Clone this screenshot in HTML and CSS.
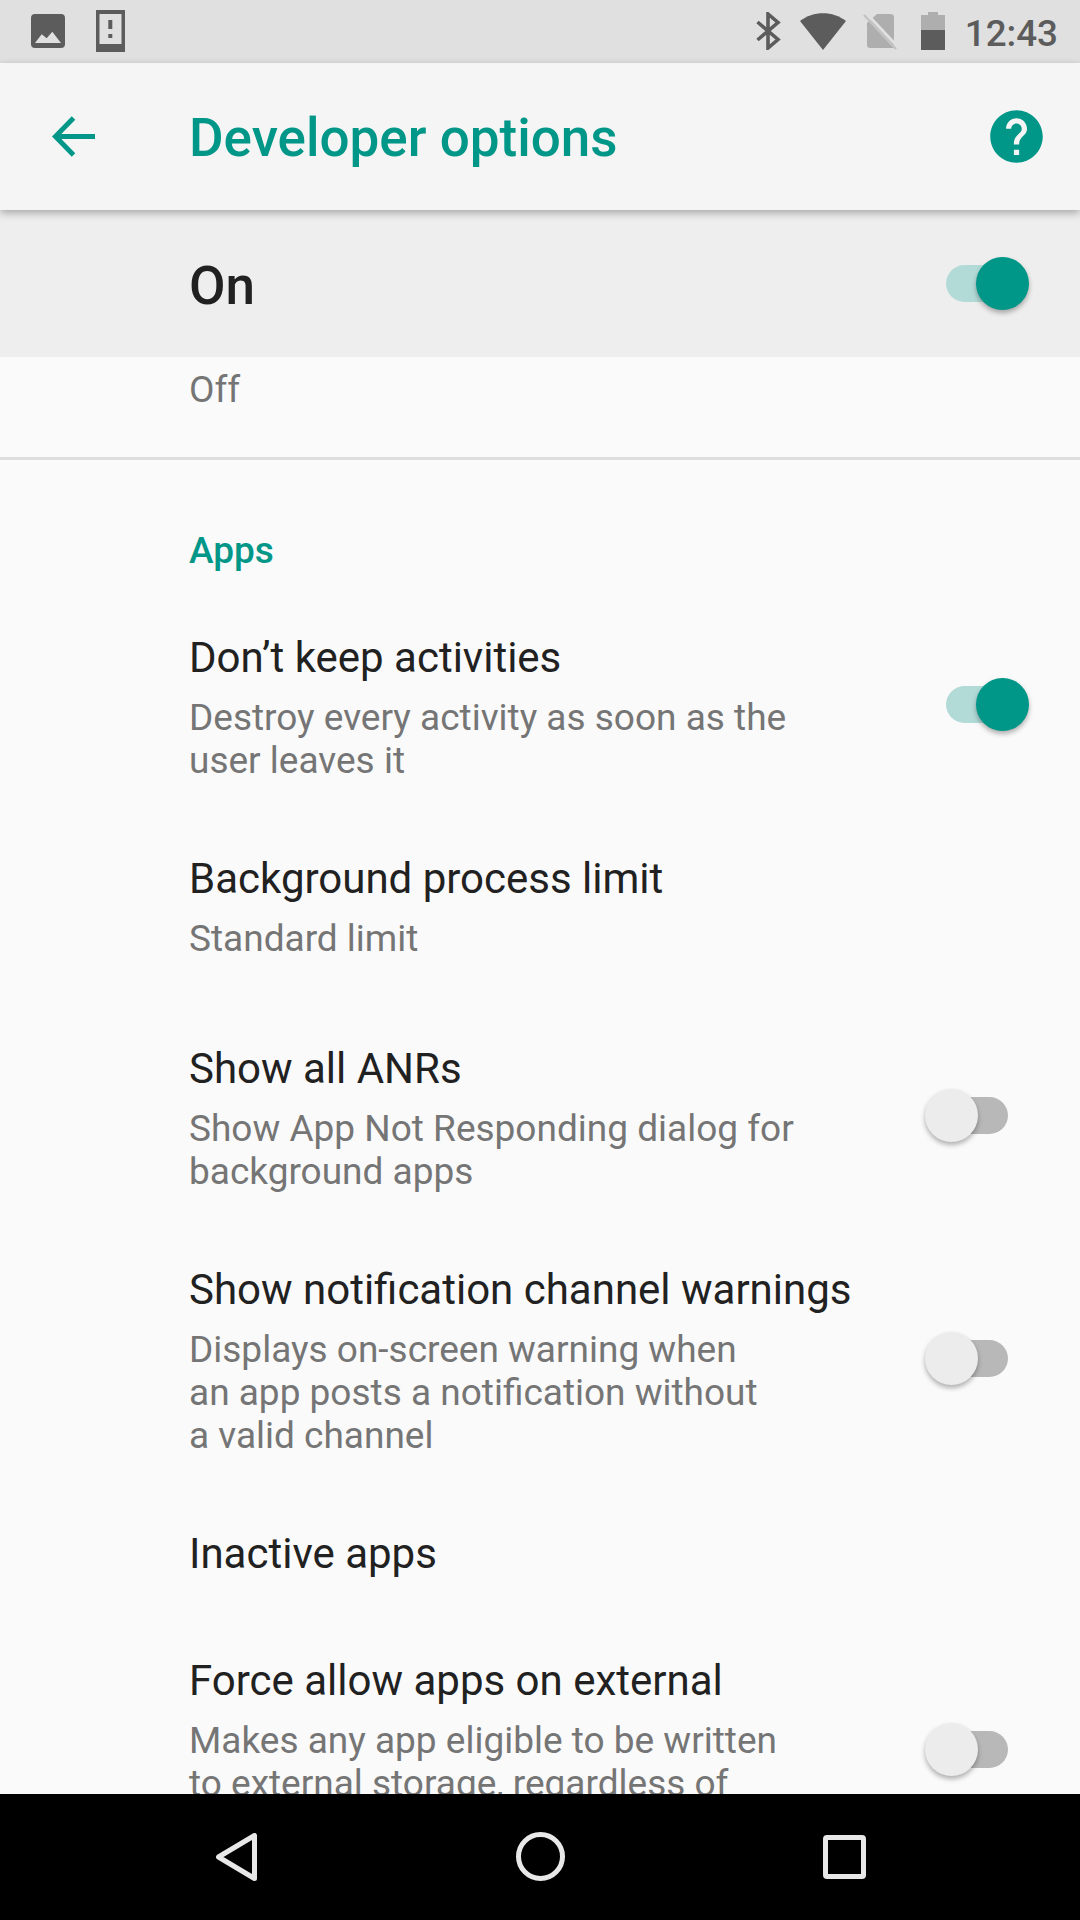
FILE: index.html
```html
<!DOCTYPE html>
<html lang="en">
<head>
<meta charset="utf-8">
<title>Developer options</title>
<link rel="stylesheet" href="styles.css">
</head>
<body>
<div class="screen">
  <header class="status">
    <div class="status-left">
      <svg class="ic-image" viewBox="0 0 34 34"><rect width="34" height="34" rx="4" fill="#5c5c5c"/><path d="M4 29 L10.700 20.300 L15.700 24.300 L21.300 17.700 L30 29 Z" fill="#e0e0e0"/></svg>
      <svg class="ic-alert" viewBox="0 0 29 42"><path fill-rule="evenodd" d="M0 0H29V42H0Z M3.500 4V34H25.500V4Z" fill="#5c5c5c"/><rect x="12.3" y="10" width="4" height="9" fill="#5c5c5c"/><rect x="12.3" y="24" width="4" height="4" fill="#5c5c5c"/></svg>
    </div>
    <div class="status-right">
      <svg class="ic-bt" viewBox="0 0 25 38"><path d="M1.500 10 L22 27.500 L12 36 V2 L22 10.500 L1.500 28" fill="none" stroke="#5c5c5c" stroke-width="3.600"/></svg>
      <svg class="ic-wifi" viewBox="0 0 46 37"><path d="M0 8 C13 -2.500 33 -2.500 46 8 L23 37 Z" fill="#5c5c5c"/></svg>
      <svg class="ic-sim" viewBox="0 0 34 36"><path d="M14 0 H27 Q31 0 31 3 V34 H7 Q4 34 4 31 V9 Z" fill="#aeaeae"/><path d="M3 -1 L35 33" stroke="#e0e0e0" stroke-width="3"/><path d="M1 1 L33 35" stroke="#c4c4c4" stroke-width="2.500"/></svg>
      <svg class="ic-batt" viewBox="0 0 24 38"><path d="M7 0 H17 V3 H24 V18 H0 V3 H7 Z" fill="#aeaeae"/><rect y="18" width="24" height="20" fill="#5c5c5c"/></svg>
      <span class="clock">12:43</span>
    </div>
  </header>

  <div class="toolbar">
    <svg class="ic-back" viewBox="0 0 44 44"><path d="M44 22 H4 M22 3 L3.500 22 L22 41" fill="none" stroke="#009688" stroke-width="5"/></svg>
    <h1 class="toolbar-title">Developer options</h1>
    <svg class="ic-help" viewBox="0 0 24 24"><path fill="#009688" d="M12 2C6.480 2 2 6.480 2 12s4.480 10 10 10 10-4.480 10-10S17.520 2 12 2zm1 17h-2v-2h2v2zm2.070-7.750l-.9.920C13.450 12.900 13 13.500 13 15h-2v-.5c0-1.100.45-2.100 1.170-2.830l1.240-1.260c.37-.36.59-.86.59-1.410 0-1.100-.9-2-2-2s-2 .9-2 2H8c0-2.210 1.790-4 4-4s4 1.790 4 4c0 .88-.36 1.680-.93 2.250z"/></svg>
  </div>

  <div class="master">
    <span class="master-label">On</span>
    <span class="switch on"><span class="track"></span><span class="thumb"></span></span>
  </div>

  <main class="content">
    <div class="off-row">Off</div>
    <div class="section-title">Apps</div>

    <div class="row">
      <div class="text"><div class="title">Don’t keep activities</div><div class="desc">Destroy every activity as soon as the<br>user leaves it</div></div>
      <span class="switch on"><span class="track"></span><span class="thumb"></span></span>
    </div>
    <div class="row row-single">
      <div class="text"><div class="title">Background process limit</div><div class="desc">Standard limit</div></div>
    </div>
    <div class="row">
      <div class="text"><div class="title">Show all ANRs</div><div class="desc">Show App Not Responding dialog for<br>background apps</div></div>
      <span class="switch"><span class="track"></span><span class="thumb"></span></span>
    </div>
    <div class="row">
      <div class="text"><div class="title">Show notification channel warnings</div><div class="desc">Displays on-screen warning when<br>an app posts a notification without<br>a valid channel</div></div>
      <span class="switch"><span class="track"></span><span class="thumb"></span></span>
    </div>
    <div class="row row-title">
      <div class="text"><div class="title">Inactive apps</div></div>
    </div>
    <div class="row">
      <div class="text"><div class="title">Force allow apps on external</div><div class="desc">Makes any app eligible to be written<br>to external storage, regardless of<br>manifest values</div></div>
      <span class="switch"><span class="track"></span><span class="thumb"></span></span>
    </div>
  </main>

  <nav class="navbar">
    <svg class="nav-back" viewBox="0 0 41 48"><path d="M38.500 2.500 V45.500 L2.500 24 Z" fill="none" stroke="#e8e8e8" stroke-width="5" stroke-linejoin="round"/></svg>
    <svg class="nav-home" viewBox="0 0 49 49"><circle cx="24.500" cy="24.500" r="22" fill="none" stroke="#e8e8e8" stroke-width="5"/></svg>
    <svg class="nav-recent" viewBox="0 0 43 44"><rect x="2.500" y="2.500" width="38" height="39" rx="1.500" fill="none" stroke="#e8e8e8" stroke-width="5"/></svg>
  </nav>
</div>
</body>
</html>
```

FILE: styles.css
```css
* { box-sizing: border-box; }
html, body { margin: 0; padding: 0; }
body { font-family: Roboto, "Noto Sans", sans-serif; background: #fafafa; }

.screen { width: 1080px; height: 1920px; display: flex; flex-direction: column; overflow: hidden; }

.status { height: 63px; flex: none; background: #e0e0e0; display: flex; justify-content: space-between; }
.status-left { display: flex; align-items: flex-start; }
.ic-image { width: 34px; height: 34px; margin: 14px 0 0 31px; }
.ic-alert { width: 29px; height: 42px; margin: 10px 0 0 31px; }
.status-right { display: flex; align-items: flex-start; padding-right: 22px; }
.ic-bt { width: 25px; height: 38px; margin-top: 12px; }
.ic-wifi { width: 46px; height: 37px; margin: 13px 0 0 19px; }
.ic-sim { width: 34px; height: 36px; margin: 14px 0 0 17px; }
.ic-batt { width: 24px; height: 38px; margin: 12px 0 0 24px; }
.clock { font-size: 36.750px; line-height: 43px; font-weight: 500; color: #5c5c5c; margin: 12px 0 0 20px; }

.toolbar { height: 147px; flex: none; background: #f5f5f5; display: flex; align-items: center; position: relative; z-index: 2; box-shadow: 0 3px 8px rgba(0,0,0,.3); }
.ic-back { width: 43px; height: 43px; margin-left: 52px; flex: none; }
.toolbar-title { flex: 1; margin: 3px 0 0 94px; font-size: 53px; font-weight: 500; color: #009688; line-height: 60px; }
.ic-help { width: 63px; height: 63px; margin-right: 32px; flex: none; }

.master { height: 147px; flex: none; background: #eeeeee; display: flex; align-items: center; justify-content: space-between; padding-left: 189px; padding-right: 51px; }
.master-label { font-size: 53px; font-weight: 500; color: #212121; margin-top: 4px; }

.switch { position: relative; display: block; width: 104px; height: 53px; flex: none; }
.row .switch { margin-bottom: 6px; }
.track { position: absolute; left: 21px; top: 8px; width: 62px; height: 37px; border-radius: 19px; background: #b8b8b8; }
.thumb { position: absolute; left: 0; top: 0; width: 53px; height: 53px; border-radius: 50%; background: #ececec; box-shadow: 0 3px 5px rgba(0,0,0,.3); }
.switch.on .track { background: #b2dbd8; }
.switch.on .thumb { left: 51px; background: #009688; }

.content { flex: 1; min-height: 0; overflow: hidden; }
.off-row { height: 103px; padding: 11px 0 0 189px; border-bottom: 3px solid #dedede; font-size: 37px; line-height: 43px; color: #757575; }
.section-title { padding: 69px 0 0 189px; font-size: 37px; line-height: 43px; font-weight: 500; color: #009688; height: 137px; }

.row { display: flex; align-items: center; justify-content: space-between; padding: 0 51px 0 189px; }
.text { padding: 36px 0; }
.row-single { min-height: 190px; align-items: flex-start; }
.row-title { height: 127px; align-items: flex-start; }
.title { font-size: 42px; line-height: 50px; color: #212121; white-space: nowrap; }
.desc { font-size: 37px; line-height: 43px; color: #757575; margin-top: 13px; white-space: nowrap; }

.navbar { height: 126px; flex: none; background: #000; position: relative; }
.nav-back, .nav-home, .nav-recent { position: absolute; }
.nav-back { left: 216px; top: 39px; width: 41px; height: 48px; }
.nav-home { left: 516px; top: 38px; width: 49px; height: 49px; }
.nav-recent { left: 823px; top: 41px; width: 43px; height: 44px; }
```
